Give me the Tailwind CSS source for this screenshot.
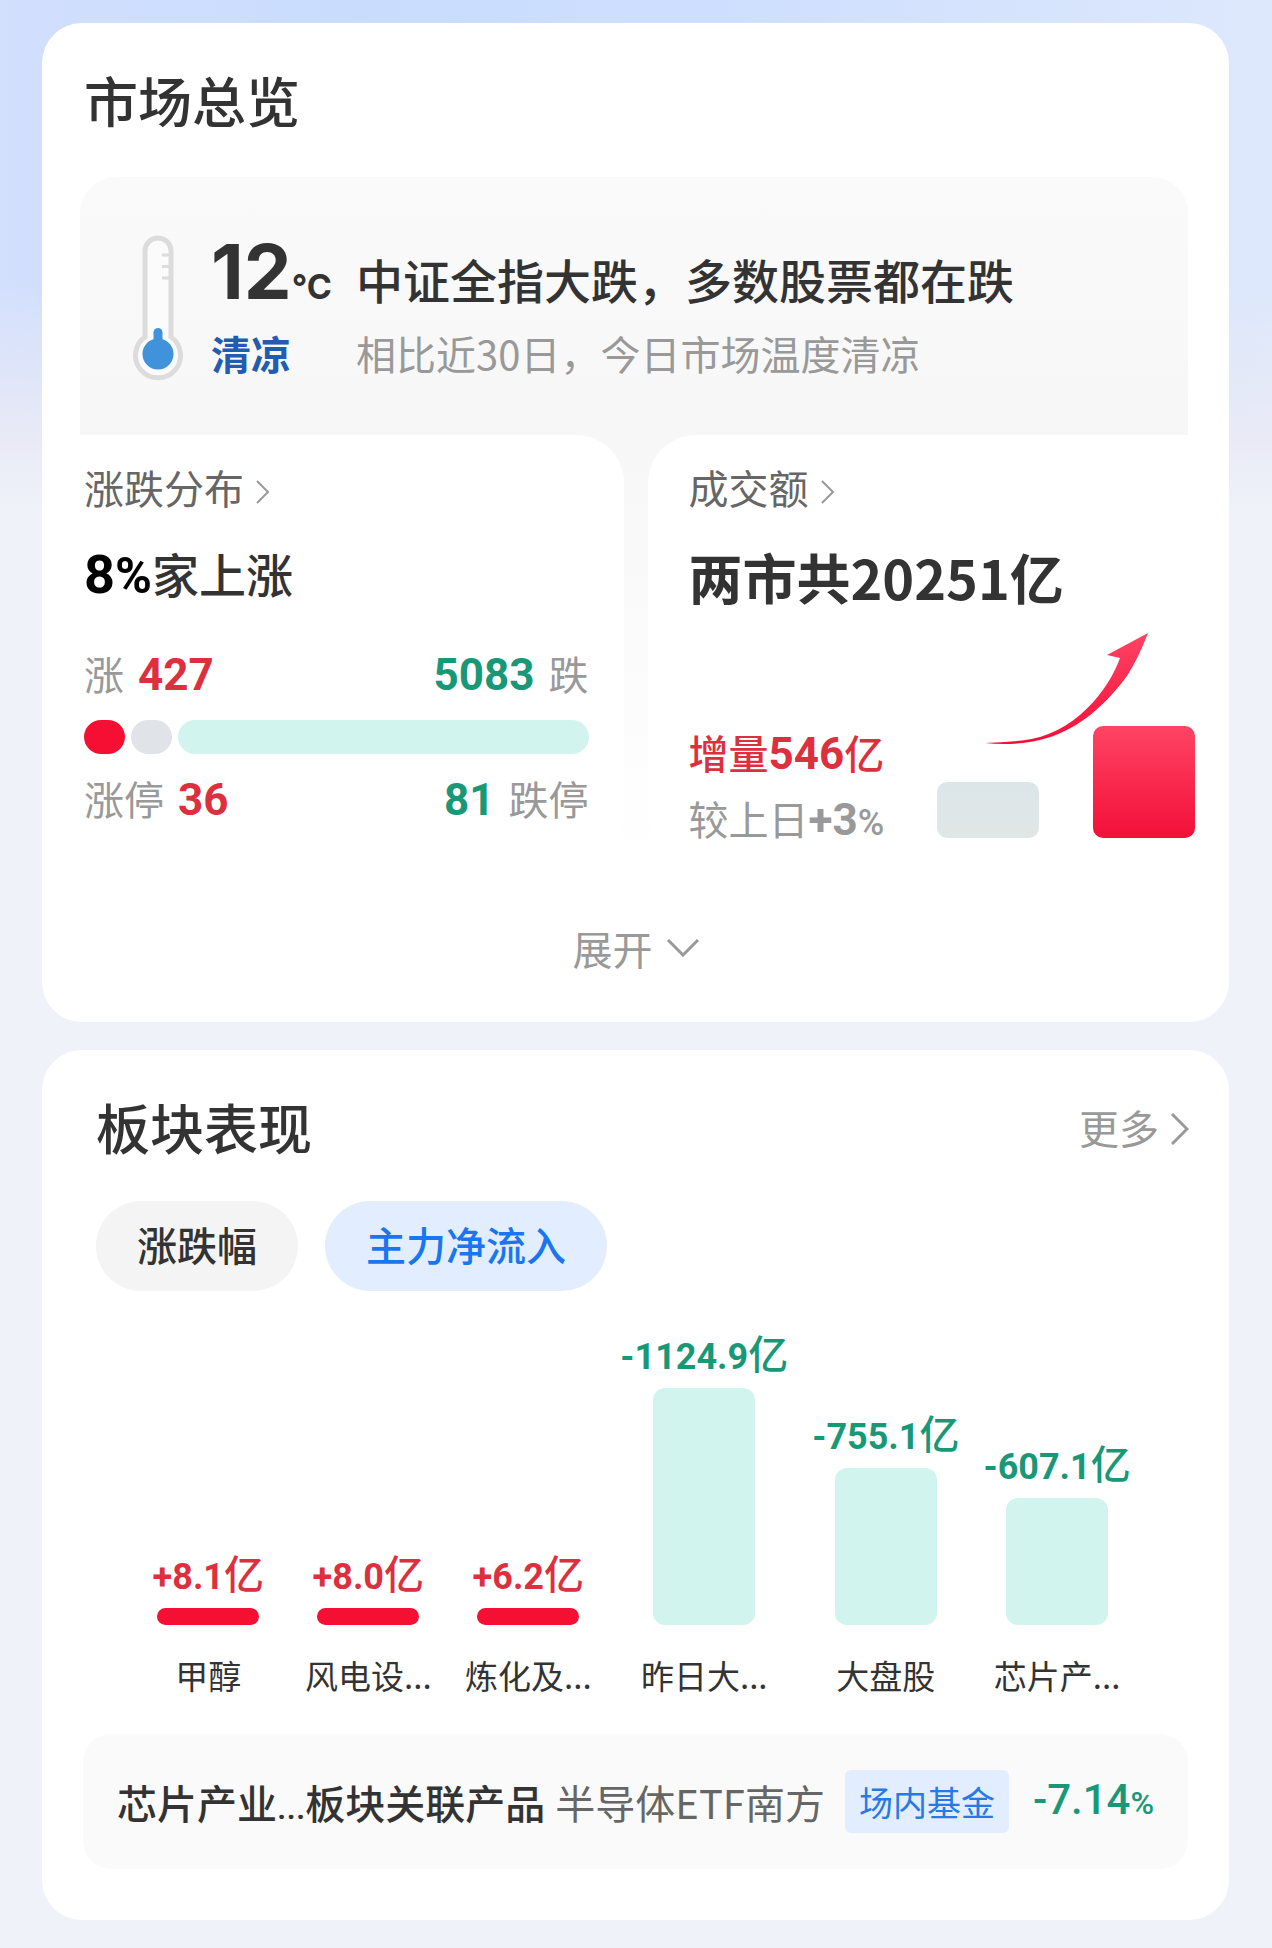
<!DOCTYPE html>
<html lang="zh-CN">
<head>
  <meta charset="UTF-8" />
  <meta name="viewport" content="width=device-width, initial-scale=1.0"/>
  <title>市场总览</title>
  <script src="https://cdn.jsdelivr.net/npm/@tailwindcss/browser@4"></script>
</head>
<body class="bg-[#eff3f9] bg-[linear-gradient(to_bottom,transparent_0px,transparent_280px,#e9eaf6_440px,#eff3f9_520px),linear-gradient(to_right,#d2dffd,#c9dcfe_28%,#cfdffe_60%,#dde8fc)] font-['Noto_Sans_CJK_SC',sans-serif] text-[#333]">

  <main class="flex flex-col gap-[28px] pt-[23px] pr-[43px] pb-[28px] pl-[42px]">

    <!-- Market overview -->
    <section class="rounded-[40px] bg-white pt-[45px] pb-[46px]">
      <h2 class="px-[42px] text-[54px] leading-[64px] font-medium">市场总览</h2>

      <!-- Temperature -->
      <div class="mr-[41px] ml-[38px] mt-[45px] flex rounded-t-[36px] bg-linear-to-b from-[#fafafa] to-[#f7f7f7] pt-[58px] pb-[54px] pl-[53px]">
        <svg class="h-[146px] w-[50px] shrink-0" viewBox="0 0 50 146" fill="none">
          <path d="M12 102V16a13 13 0 0 1 26 0v86a22.500 22.500 0 1 1-26 0z" fill="#fbfbfb" stroke="#dcdcdc" stroke-width="5"/>
          <path d="M29 20h7M29 31.500h7M29 43h7" stroke="#dcdcdc" stroke-width="3"/>
          <rect x="20.500" y="93" width="9" height="20" rx="4.500" fill="#4093da"/>
          <circle cx="25" cy="119" r="15.500" fill="#4093da"/>
        </svg>
        <div class="ml-[28px] grid h-[146px] grid-cols-[145px_1fr] content-between items-baseline whitespace-nowrap">
          <p class="font-[Inter] text-[76px] leading-[72px] font-bold">12<span class="text-[34px] leading-none">°C</span></p>
          <p class="text-[47px] leading-[72px] font-medium">中证全指大跌，多数股票都在跌</p>
          <p class="text-[40px] leading-[56px] font-bold text-[#215cb0]">清凉</p>
          <p class="text-[40px] leading-[56px] text-[#999]">相比近30日，今日市场温度清凉</p>
        </div>
      </div>

      <div class="mr-[41px] ml-[38px] bg-linear-to-b from-[#f7f7f7] to-white">
        <div class="-mr-[41px] -ml-[38px] grid grid-cols-2 gap-[24px]">

          <!-- Up / down distribution -->
          <div class="rounded-r-[48px] bg-white pt-[24px] pr-[35px] pb-[34px] pl-[42px]">
            <a href="#" class="flex items-center text-[40px] leading-[56px] text-[#666]">涨跌分布
              <svg class="mt-[10px] ml-[12px] h-[24px] w-[14px]" viewBox="0 0 14 24" fill="none" stroke="#999" stroke-width="2"><path d="M1 1l11 11L1 23"/></svg>
            </a>
            <p class="mt-[26px] text-[47px] leading-[64px] font-medium"><span class="font-[Roboto] text-[54px] leading-none font-bold text-black">8<span class="text-[50px]">%</span></span>家上涨</p>
            <div class="mt-[40px] flex items-baseline gap-[14px] text-[40px] leading-[56px] text-[#999]">
              <span>涨</span>
              <b class="font-[Roboto] text-[44px] leading-none text-[#dd303e]">427</b>
              <b class="ml-auto font-[Roboto] text-[44px] leading-none text-[#199877]">5083</b>
              <span>跌</span>
            </div>
            <div class="mt-[19px] flex h-[34px] gap-[6px]">
              <div class="w-[41px] rounded-full bg-[#f51033]"></div>
              <div class="w-[41px] rounded-full bg-[#e0e4e8]"></div>
              <div class="flex-1 rounded-full bg-[#d1f5ee]"></div>
            </div>
            <div class="mt-[16px] flex items-baseline gap-[14px] text-[40px] leading-[56px] text-[#999]">
              <span>涨停</span>
              <b class="font-[Roboto] text-[44px] leading-none text-[#dd303e]">36</b>
              <b class="ml-auto font-[Roboto] text-[44px] leading-none text-[#199877]">81</b>
              <span>跌停</span>
            </div>
          </div>

          <!-- Turnover -->
          <div class="rounded-l-[48px] bg-white pt-[24px] pr-[34px] pb-[14px] pl-[41px]">
            <a href="#" class="flex items-center text-[40px] leading-[56px] text-[#666]">成交额
              <svg class="mt-[10px] ml-[12px] h-[24px] w-[14px]" viewBox="0 0 14 24" fill="none" stroke="#999" stroke-width="2"><path d="M1 1l11 11L1 23"/></svg>
            </a>
            <p class="mt-[26px] text-[54px] leading-[72px] font-bold whitespace-nowrap">两市共20251亿</p>
            <div class="mt-[20px] flex items-end justify-between">
              <div class="text-[40px] leading-[56px] whitespace-nowrap">
                <p class="font-medium text-[#dd303e]">增量<b class="font-[Roboto] text-[44px] leading-none">546</b>亿</p>
                <p class="mt-[10px] text-[#999]">较上日<b class="font-[Roboto] text-[44px] leading-none">+3<span class="text-[36px] font-medium">%</span></b></p>
              </div>
              <svg class="mb-[8px] h-[205px] w-[258px] shrink-0" viewBox="0 0 258 205">
                <defs>
                  <linearGradient id="rise" x1="0" y1="0" x2="0" y2="1"><stop offset="0" stop-color="#ff4464"/><stop offset="1" stop-color="#f30f38"/></linearGradient>
                  <linearGradient id="flat" x1="0" y1="0" x2="0" y2="1"><stop offset="0" stop-color="#dce6e9"/><stop offset="1" stop-color="#e1e6e6"/></linearGradient>
                </defs>
                <path d="M211 0L170 22l13 3C172 56 138 102 85 107.500q-20 2-37 2.500q18 2 38 0C142 104 174 64 190 43Q201 26 211 0z" fill="url(#rise)"/>
                <rect x="0" y="149" width="102" height="56" rx="10" fill="url(#flat)"/>
                <rect x="156" y="93" width="102" height="112" rx="10" fill="url(#rise)"/>
              </svg>
            </div>
          </div>
        </div>
      </div>

      <button type="button" class="mx-auto mt-[60px] flex items-center text-[40px] leading-[56px] text-[#999]">展开
        <svg class="ml-[14px] h-[18px] w-[32px]" viewBox="0 0 32 18" fill="none" stroke="#999" stroke-width="3"><path d="M1 1l15 15L31 1"/></svg>
      </button>
    </section>

    <!-- Sector performance -->
    <section class="rounded-[40px] bg-white pt-[45px] pb-[51px]">
      <div class="flex items-center justify-between pr-[40px] pl-[54px]">
        <h2 class="text-[54px] leading-[64px] font-medium">板块表现</h2>
        <a href="#" class="flex items-center text-[40px] leading-[56px] text-[#999]">更多
          <svg class="mt-[4px] ml-[12px] h-[32px] w-[18px]" viewBox="0 0 18 32" fill="none" stroke="#999" stroke-width="3"><path d="M1 1l15 15L1 31"/></svg>
        </a>
      </div>

      <div class="mt-[42px] flex gap-[27px] px-[54px] text-[40px] leading-[86px] font-medium">
        <button type="button" class="rounded-full bg-[#f4f4f4] px-[41px] pb-[4px]">涨跌幅</button>
        <button type="button" class="rounded-full bg-[#e2eeff] px-[41px] pb-[4px] text-[#1a76f0]">主力净流入</button>
      </div>

      <!-- Net inflow chart -->
      <div class="mt-[37px] flex items-end justify-center gap-[24px] text-[33px] leading-[48px] whitespace-nowrap">
        <div class="flex min-w-[136px] flex-col items-center">
          <p class="mb-[12px] text-[40px] font-medium text-[#dd303e]"><b class="font-[Roboto] text-[36px] leading-none">+8.1</b>亿</p>
          <div class="h-[17px] w-[102px] rounded-full bg-[#f51033]"></div>
          <p class="mt-[26px]">甲醇</p>
        </div>
        <div class="flex min-w-[136px] flex-col items-center">
          <p class="mb-[12px] text-[40px] font-medium text-[#dd303e]"><b class="font-[Roboto] text-[36px] leading-none">+8.0</b>亿</p>
          <div class="h-[17px] w-[102px] rounded-full bg-[#f51033]"></div>
          <p class="mt-[26px]">风电设...</p>
        </div>
        <div class="flex min-w-[136px] flex-col items-center">
          <p class="mb-[12px] text-[40px] font-medium text-[#dd303e]"><b class="font-[Roboto] text-[36px] leading-none">+6.2</b>亿</p>
          <div class="h-[17px] w-[102px] rounded-full bg-[#f51033]"></div>
          <p class="mt-[26px]">炼化及...</p>
        </div>
        <div class="flex min-w-[136px] flex-col items-center">
          <p class="mb-[12px] text-[40px] font-medium text-[#199877]"><b class="font-[Roboto] text-[36px] leading-none">-1124.9</b>亿</p>
          <div class="h-[237px] w-[102px] rounded-[12px] bg-[#d1f5ee]"></div>
          <p class="mt-[26px]">昨日大...</p>
        </div>
        <div class="flex min-w-[136px] flex-col items-center">
          <p class="mb-[12px] text-[40px] font-medium text-[#199877]"><b class="font-[Roboto] text-[36px] leading-none">-755.1</b>亿</p>
          <div class="h-[157px] w-[102px] rounded-[12px] bg-[#d1f5ee]"></div>
          <p class="mt-[26px]">大盘股</p>
        </div>
        <div class="flex min-w-[136px] flex-col items-center">
          <p class="mb-[12px] text-[40px] font-medium text-[#199877]"><b class="font-[Roboto] text-[36px] leading-none">-607.1</b>亿</p>
          <div class="h-[127px] w-[102px] rounded-[12px] bg-[#d1f5ee]"></div>
          <p class="mt-[26px]">芯片产...</p>
        </div>
      </div>

      <!-- Related product -->
      <a href="#" class="mx-[41px] mt-[35px] flex h-[135px] items-center rounded-[28px] bg-[#fafafa] pr-[34px] pl-[34px] text-[40px] leading-[56px] whitespace-nowrap">
        <span class="font-medium">芯片产业<span class="font-[Roboto] text-[34px] leading-none">...</span>板块关联产品</span>
        <span class="ml-[10px] text-[#666]">半导体ETF南方</span>
        <span class="ml-[20px] rounded-[6px] bg-[#e2eeff] px-[14px] text-[34px] leading-[63px] text-[#2878e6]">场内基金</span>
        <span class="ml-auto font-[Roboto] text-[42px] font-medium text-[#199877]">-7.14<span class="text-[32px]">%</span></span>
      </a>
    </section>

  </main>

</body>
</html>
